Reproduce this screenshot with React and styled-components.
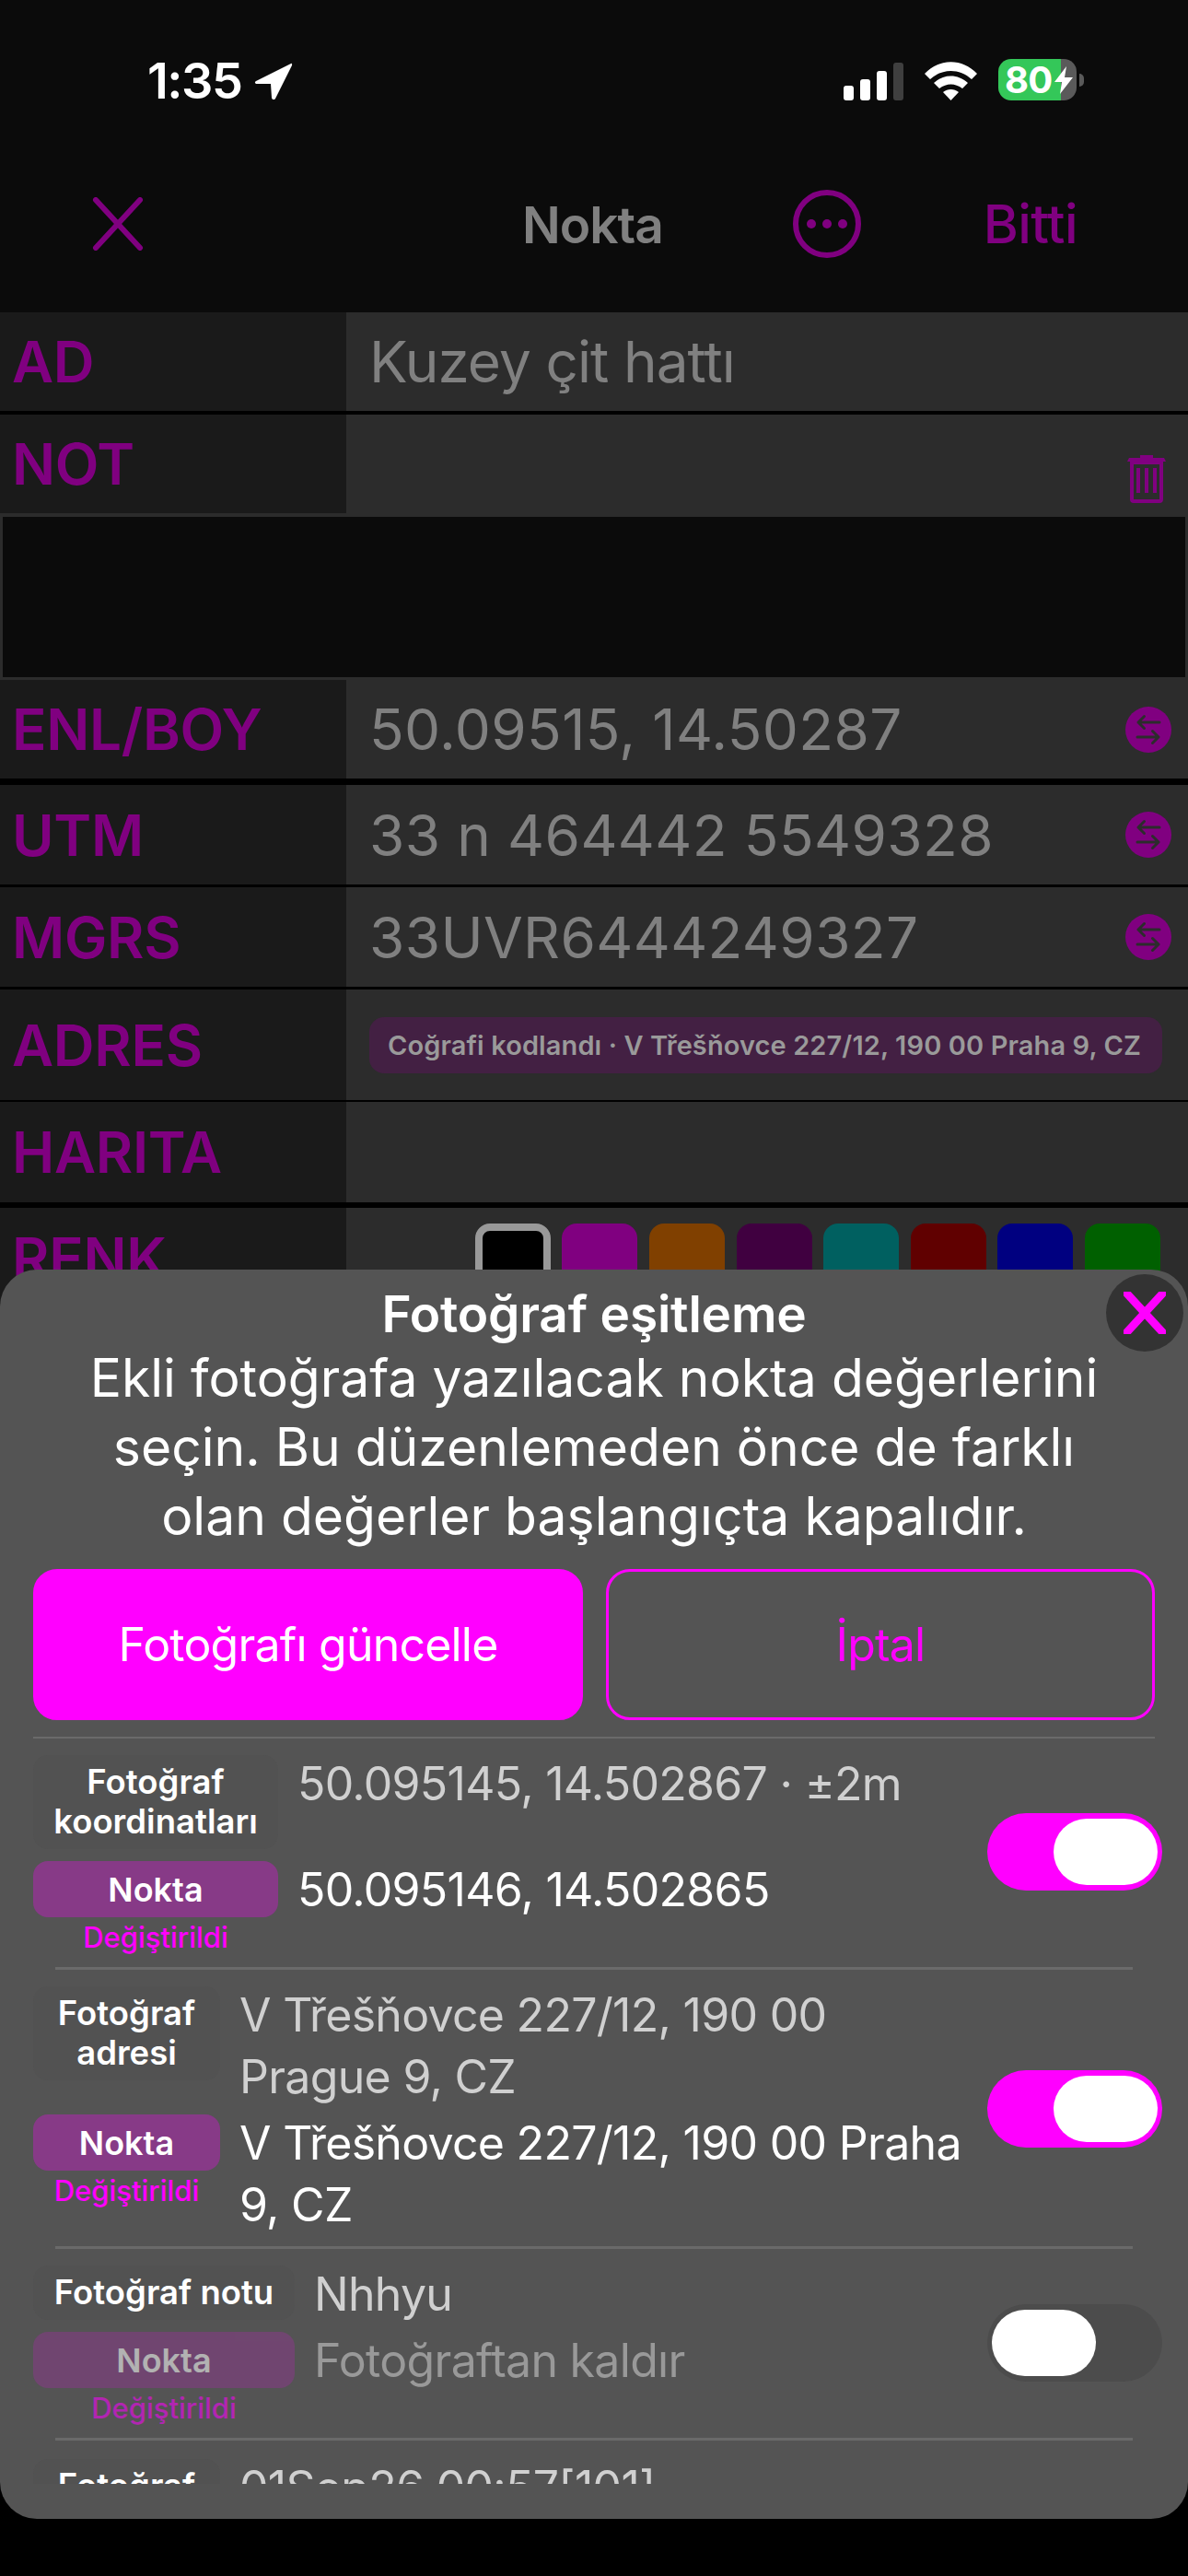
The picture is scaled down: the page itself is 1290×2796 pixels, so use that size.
import React from "react";
import styled, { createGlobalStyle } from "styled-components";

const GlobalStyle = createGlobalStyle`
  html, body {
    margin: 0;
    padding: 0;
    background: #000;
    font-family: Inter, "Noto Sans", "Liberation Sans", sans-serif;
  }
  * { box-sizing: border-box; }
`;

const Screen = styled.div`
  position: relative;
  width: 1290px;
  height: 2796px;
  overflow: hidden;
  background: #000;
`;

const Header = styled.header`
  height: 339px;
  background: #0b0b0b;
`;

const StatusBar = styled.div`
  height: 170px;
  display: flex;
  align-items: flex-start;
  padding: 64px 113px 0 160px;
`;

const Time = styled.span`
  font-size: 54px;
  line-height: 48px;
  font-weight: 600;
  color: #fff;
  letter-spacing: -1.5px;
`;

const LocationIcon = styled.svg`
  width: 43px;
  height: 41px;
  margin: 4px 0 0 13px;
`;

const StatusRight = styled.div`
  margin-left: auto;
  display: flex;
  align-items: center;
  height: 45px;
`;

const SignalIcon = styled.svg`
  width: 65px;
  height: 41px;
  margin-top: 3px;
`;

const WifiIcon = styled.svg`
  width: 57px;
  height: 42px;
  margin: 3px 23px 0;
`;

const Battery = styled.div`
  position: relative;
  width: 85px;
  height: 45px;
  border-radius: 14px;
  overflow: hidden;
  background: linear-gradient(90deg, #34c759 0 68px, #5a5a5a 68px);
  display: flex;
  align-items: center;
  padding-left: 7px;
  font-size: 40px;
  line-height: 45px;
  font-weight: 700;
  letter-spacing: -0.8px;
  color: #fff;
`;

const BatteryBolt = styled.svg`
  position: absolute;
  right: 4px;
  top: 8px;
  width: 20px;
  height: 30px;
`;

const BatteryNub = styled.span`
  width: 5px;
  height: 14px;
  margin-left: 3px;
  border-radius: 0 5px 5px 0;
  background: #5a5a5a;
`;

const NavBar = styled.nav`
  height: 169px;
  position: relative;
  display: flex;
  align-items: center;
  padding: 0 120px 23px 99px;
`;

const NavTitle = styled.span`
  position: absolute;
  left: 567px;
  top: 46px;
  font-size: 55px;
  line-height: 56px;
  font-weight: 600;
  letter-spacing: -1px;
  color: #808080;
`;

const NavDone = styled.span`
  font-size: 58px;
  line-height: 56px;
  font-weight: 500;
  letter-spacing: -0.6px;
  color: #800080;
`;

const MoreIcon = styled.svg`
  width: 74px;
  height: 74px;
  margin: 0 133px 0 auto;
`;

const CloseIcon = styled.svg`
  width: 58px;
  height: 58px;
`;

const FormRow = styled.div`
  display: grid;
  grid-template-columns: 376px 1fr;
  height: ${(p) => p.$height}px;
  margin-bottom: ${(p) => p.$gap}px;
  border-bottom: ${(p) => (p.$strip ? "4px solid #2c2c2c" : "none")};
`;

const FormLabel = styled.div`
  display: flex;
  align-items: center;
  padding-left: 13px;
  background: #1a1a1a;
  font-size: 62px;
  font-weight: 600;
  letter-spacing: -0.3px;
  color: #800080;
`;

const FormValue = styled.div`
  display: flex;
  align-items: center;
  padding: 0 18px 0 25px;
  background: #2c2c2c;
  font-size: 62px;
  letter-spacing: ${(p) => p.$spacing ?? 0.4}px;
  color: #808080;
`;

const NoteBox = styled.div`
  height: 177px;
  background: #0b0b0b;
  border: 3px solid #2c2c2c;
  border-top: 0;
`;

const TrashIcon = styled.svg`
  width: 42px;
  height: 54px;
  margin: auto 6px 11px auto;
`;

const SwapIcon = styled.svg`
  width: 50px;
  height: 50px;
  margin-left: auto;
`;

const AddressPill = styled.div`
  flex: 1;
  height: 61px;
  margin-right: 10px;
  display: flex;
  align-items: center;
  padding-left: 20px;
  border-radius: 16px;
  background: #432043;
  font-size: 29px;
  font-weight: 600;
  letter-spacing: 0.1px;
  color: #9a9a9a;
  white-space: nowrap;
`;

const Swatches = styled.div`
  display: flex;
  gap: 12.6px;
  align-self: flex-start;
  margin: 17px 0 0 auto;
  padding-right: 12px;
`;

const Swatch = styled.div`
  width: 82px;
  height: 92px;
  border-radius: 16px;
  background: ${(p) => p.$color};
  border: ${(p) => (p.$selected ? "8px solid #999" : "none")};
`;

const Sheet = styled.section`
  position: absolute;
  left: 0;
  top: 1378px;
  width: 1290px;
  height: 1356px;
  display: flex;
  flex-direction: column;
  padding: 21px 36px 38px;
  border-radius: 40px;
  background: #545454;
  overflow: hidden;
`;

const SheetTitle = styled.h2`
  margin: 0;
  font-size: 55px;
  line-height: 54px;
  font-weight: 600;
  letter-spacing: -0.2px;
  color: #fff;
  text-align: center;
`;

const SheetClose = styled.button`
  position: absolute;
  right: 5px;
  top: 5px;
  width: 84px;
  height: 84px;
  padding: 0;
  border: 0;
  border-radius: 50%;
  background: #333;
  display: flex;
  align-items: center;
  justify-content: center;
`;

const SheetText = styled.p`
  margin: 5px 0 0;
  font-size: 57px;
  line-height: 75px;
  color: #fff;
  text-align: center;
`;

const Actions = styled.div`
  display: grid;
  grid-template-columns: 597px 596px;
  gap: 25px;
  margin-top: 20px;
`;

const ActionButton = styled.button`
  height: 164px;
  border-radius: 26px;
  border: 3px solid #ff00ff;
  background: ${(p) => (p.$primary ? "#ff00ff" : "transparent")};
  color: ${(p) => (p.$primary ? "#fff" : "#ff00ff")};
  font-family: inherit;
  font-size: 50px;
  letter-spacing: -0.8px;
`;

const TopRule = styled.div`
  height: 2px;
  margin-top: 18px;
  background: #6a6a6a;
`;

const Rule = styled.div`
  height: 3px;
  margin: 0 24px;
  background: #6a6a6a;
`;

const Scroller = styled.div`
  flex: 1;
  min-height: 0;
  margin-right: -8px;
  padding-right: 8px;
  overflow: hidden;
`;

const SyncRow = styled.div`
  display: flex;
  align-items: center;
  justify-content: space-between;
  padding: ${(p) => p.$top ?? 18}px 0 ${(p) => p.$bottom ?? 14}px;
`;

const SyncGrid = styled.div`
  width: 1009px;
  display: grid;
  grid-template-columns: ${(p) => p.$labelWidth}px 1fr;
  column-gap: 21px;
  row-gap: ${(p) => p.$rowGap}px;
  align-items: start;
`;

const PhotoLabel = styled.div`
  padding: 8px 0;
  border-radius: 16px;
  background: #525252;
  font-size: 36.5px;
  line-height: 43px;
  font-weight: 600;
  color: #fff;
  text-align: center;
`;

const PointCell = styled.div`
  display: flex;
  flex-direction: column;
  opacity: ${(p) => (p.$off ? 0.55 : 1)};
`;

const PointPill = styled.div`
  height: 61px;
  display: flex;
  align-items: center;
  justify-content: center;
  border-radius: 16px;
  background: #873a87;
  font-size: 36px;
  font-weight: 600;
  color: #fff;
`;

const ChangedNote = styled.div`
  margin-top: 4px;
  font-size: 31px;
  line-height: 36px;
  font-weight: 500;
  color: #ff00ff;
  text-align: center;
`;

const SyncValue = styled.div`
  margin-top: -2px;
  font-size: 50px;
  line-height: 67px;
  letter-spacing: -0.7px;
  white-space: nowrap;
  color: ${(p) => p.$color};
`;

const Toggle = styled.div`
  flex: none;
  width: 190px;
  height: 84px;
  margin: 0 -8px 6px 0;
  padding: 0 5px;
  display: flex;
  align-items: center;
  justify-content: ${(p) => (p.$on ? "flex-end" : "flex-start")};
  border-radius: 42px;
  background: ${(p) => (p.$on ? "#ff00ff" : "#4c4c4c")};
`;

const ToggleThumb = styled.span`
  width: 113px;
  height: 72px;
  border-radius: 36px;
  background: #fff;
`;

const swatchColors = ["#000", "#800080", "#804000", "#400040", "#006060", "#600000", "#000080", "#006000"];

const Swap = () => (
  <SwapIcon viewBox="0 0 50 50">
    <circle cx="25" cy="25" r="25" fill="#800080" />
    <path
      d="M37 17H14M20.500 10.500L14 17l6.500 6.500M13 33h23M29.500 26.500L36 33l-6.500 6.500"
      fill="none"
      stroke="#2c2c2c"
      strokeWidth="3"
      strokeLinecap="round"
      strokeLinejoin="round"
    />
  </SwapIcon>
);

const CrossPath = ({ color, width }) => (
  <path d="M5 3L53 55M53 3L5 55" stroke={color} strokeWidth={width} strokeLinecap="round" fill="none" />
);

export default function App() {
  return (
    <Screen>
      <GlobalStyle />
      <Header>
        <StatusBar>
          <Time>1:35</Time>
          <LocationIcon viewBox="0 0 43 41">
            <path d="M41 1L3 20c-2 1-1 3 1 3l15 0 1 15c0 2 3 3 4 1L42 3c.5-1.500-.5-2.500-1-2z" fill="#fff" />
          </LocationIcon>
          <StatusRight>
            <SignalIcon viewBox="0 0 65 41">
              <rect x="0" y="25" width="11" height="16" rx="3" fill="#fff" />
              <rect x="18" y="18" width="11" height="23" rx="3" fill="#fff" />
              <rect x="36" y="9" width="11" height="32" rx="3" fill="#fff" />
              <rect x="54" y="0" width="11" height="41" rx="3" fill="#3f3f3f" />
            </SignalIcon>
            <WifiIcon viewBox="0 0 57 42">
              <path d="M0 13C16-4 41-4 57 13l-6 6C38 7 19 7 6 19z" fill="#fff" />
              <path d="M10 23c11-10 26-10 37 0l-6 6c-8-6-17-6-25 0z" fill="#fff" />
              <path d="M20 33c5-4 12-4 17 0L28.500 42z" fill="#fff" />
            </WifiIcon>
            <Battery>
              80
              <BatteryBolt viewBox="0 0 20 30">
                <path d="M13 0L0 17h8L6 30 20 12h-9z" fill="#fff" />
              </BatteryBolt>
            </Battery>
            <BatteryNub />
          </StatusRight>
        </StatusBar>
        <NavBar>
          <CloseIcon viewBox="0 0 58 58">
            <CrossPath color="#800080" width="6" />
          </CloseIcon>
          <NavTitle>Nokta</NavTitle>
          <MoreIcon viewBox="0 0 74 74">
            <circle cx="37" cy="37" r="34" fill="none" stroke="#800080" strokeWidth="6" />
            <circle cx="20" cy="37" r="5" fill="#800080" />
            <circle cx="37" cy="37" r="5" fill="#800080" />
            <circle cx="54" cy="37" r="5" fill="#800080" />
          </MoreIcon>
          <NavDone>Bitti</NavDone>
        </NavBar>
      </Header>

      <FormRow $height={107} $gap={4}>
        <FormLabel>AD</FormLabel>
        <FormValue $spacing={-0.9}>Kuzey çit hattı</FormValue>
      </FormRow>
      <FormRow $height={111} $gap={0} $strip>
        <FormLabel>NOT</FormLabel>
        <FormValue>
          <TrashIcon viewBox="0 0 42 54">
            <path d="M14 5V2h14v3h12l2 4H0l2-4z" fill="#800080" />
            <path
              d="M5 10h32v40a2 2 0 0 1-2 2H7a2 2 0 0 1-2-2zM12 16v27M21 16v27M30 16v27"
              fill="none"
              stroke="#800080"
              strokeWidth="4"
            />
          </TrashIcon>
        </FormValue>
      </FormRow>
      <NoteBox />
      <FormRow $height={107} $gap={7}>
        <FormLabel>ENL/BOY</FormLabel>
        <FormValue>
          50.09515, 14.50287
          <Swap />
        </FormValue>
      </FormRow>
      <FormRow $height={108} $gap={3}>
        <FormLabel>UTM</FormLabel>
        <FormValue>
          33 n 464442 5549328
          <Swap />
        </FormValue>
      </FormRow>
      <FormRow $height={108} $gap={3}>
        <FormLabel>MGRS</FormLabel>
        <FormValue>
          33UVR6444249327
          <Swap />
        </FormValue>
      </FormRow>
      <FormRow $height={120} $gap={2}>
        <FormLabel>ADRES</FormLabel>
        <FormValue>
          <AddressPill>Coğrafi kodlandı · V Třešňovce 227/12, 190 00 Praha 9, CZ</AddressPill>
        </FormValue>
      </FormRow>
      <FormRow $height={109} $gap={6}>
        <FormLabel>HARITA</FormLabel>
        <FormValue />
      </FormRow>
      <FormRow $height={109} $gap={0}>
        <FormLabel>RENK</FormLabel>
        <FormValue>
          <Swatches>
            {swatchColors.map((color, i) => (
              <Swatch key={color} $color={color} $selected={i === 0} />
            ))}
          </Swatches>
        </FormValue>
      </FormRow>

      <Sheet>
        <SheetTitle>Fotoğraf eşitleme</SheetTitle>
        <SheetClose aria-label="Kapat">
          <svg width="46" height="46" viewBox="0 0 58 58">
            <CrossPath color="#ff00ff" width="11" />
          </svg>
        </SheetClose>
        <SheetText>
          Ekli fotoğrafa yazılacak nokta değerlerini
          <br />
          seçin. Bu düzenlemeden önce de farklı
          <br />
          olan değerler başlangıçta kapalıdır.
        </SheetText>
        <Actions>
          <ActionButton $primary>Fotoğrafı güncelle</ActionButton>
          <ActionButton>İptal</ActionButton>
        </Actions>
        <TopRule />
        <Scroller>
          <SyncRow>
            <SyncGrid $labelWidth={266} $rowGap={13}>
              <PhotoLabel>
                Fotoğraf
                <br />
                koordinatları
              </PhotoLabel>
              <SyncValue $color="#d0d0d0">50.095145, 14.502867 · ±2m</SyncValue>
              <PointCell>
                <PointPill>Nokta</PointPill>
                <ChangedNote>Değiştirildi</ChangedNote>
              </PointCell>
              <SyncValue $color="#fff">50.095146, 14.502865</SyncValue>
            </SyncGrid>
            <Toggle $on>
              <ToggleThumb />
            </Toggle>
          </SyncRow>
          <Rule />
          <SyncRow $bottom={11}>
            <SyncGrid $labelWidth={203} $rowGap={7}>
              <PhotoLabel>
                Fotoğraf
                <br />
                adresi
              </PhotoLabel>
              <SyncValue $color="#d0d0d0">
                V Třešňovce 227/12, 190 00
                <br />
                Prague 9, CZ
              </SyncValue>
              <PointCell>
                <PointPill>Nokta</PointPill>
                <ChangedNote>Değiştirildi</ChangedNote>
              </PointCell>
              <SyncValue $color="#fff">
                V Třešňovce 227/12, 190 00 Praha
                <br />
                9, CZ
              </SyncValue>
            </SyncGrid>
            <Toggle $on>
              <ToggleThumb />
            </Toggle>
          </SyncRow>
          <Rule />
          <SyncRow>
            <SyncGrid $labelWidth={284} $rowGap={7}>
              <PhotoLabel>Fotoğraf notu</PhotoLabel>
              <SyncValue $color="#d0d0d0">Nhhyu</SyncValue>
              <PointCell $off>
                <PointPill>Nokta</PointPill>
                <ChangedNote>Değiştirildi</ChangedNote>
              </PointCell>
              <SyncValue $color="#999">Fotoğraftan kaldır</SyncValue>
            </SyncGrid>
            <Toggle>
              <ToggleThumb />
            </Toggle>
          </SyncRow>
          <Rule />
          <SyncRow $top={20}>
            <SyncGrid $labelWidth={203} $rowGap={7}>
              <PhotoLabel>Fotoğraf</PhotoLabel>
              <SyncValue $color="#d0d0d0">01Sep26 00:57[101]</SyncValue>
            </SyncGrid>
          </SyncRow>
        </Scroller>
      </Sheet>
    </Screen>
  );
}
